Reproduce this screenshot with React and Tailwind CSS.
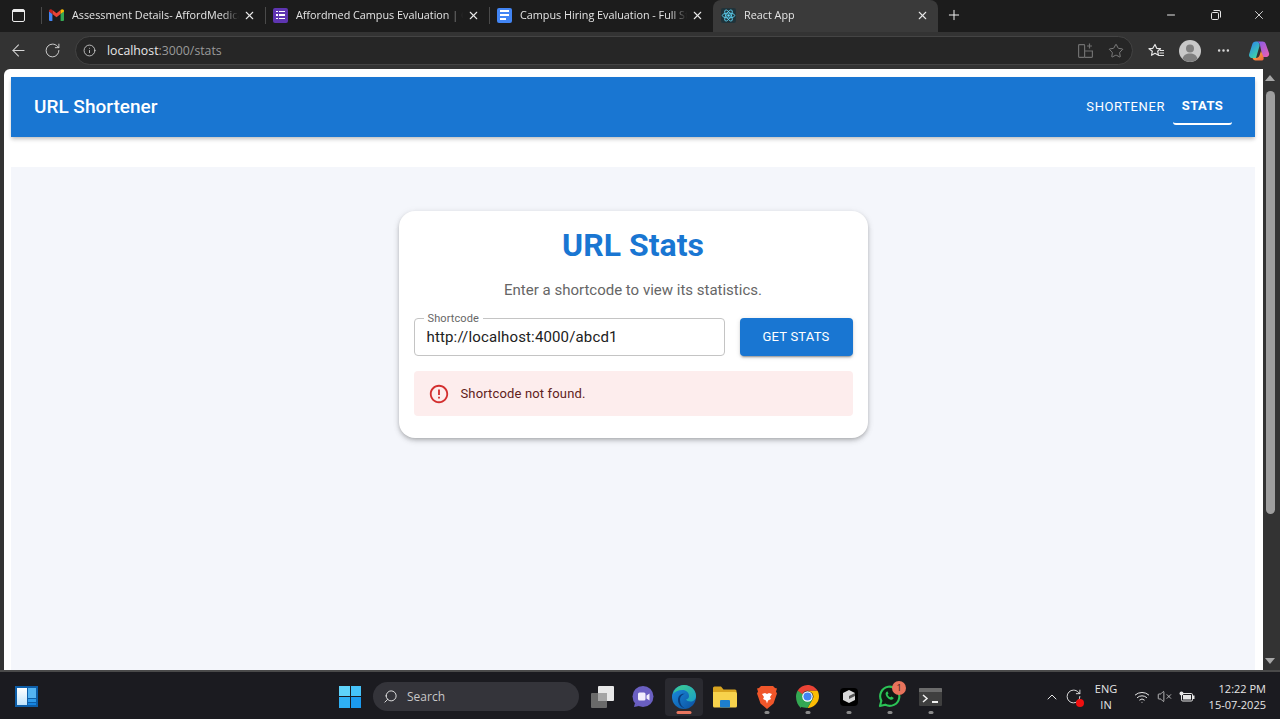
import { X, Plus, Minus, ArrowLeft, RotateCw, Info, Star, MoreHorizontal, ChevronUp, Search, Wifi, VolumeX } from 'lucide-react';

const GmailIcon = () => (
  <svg width="15" height="12" viewBox="0 0 15 12">
    <path d="M0 2v9a1 1 0 0 0 1 1h2.400V5z" fill="#4285f4" />
    <path d="M15 2v9a1 1 0 0 1-1 1h-2.400V5z" fill="#34a853" />
    <path d="M3.400 5v-4L7.500 4.200 11.600 1v4L7.500 8.200z" fill="#ea4335" />
    <path d="M0 2c0-1.600 1.900-2.500 3.400-1v4L0 2.400z" fill="#c5221f" />
    <path d="M15 2c0-1.600-1.900-2.500-3.400-1v4L15 2.400z" fill="#fbbc04" />
  </svg>
);

const FormsIcon = () => (
  <div className="w-[15px] h-[15px] rounded-[2px] bg-[#5e35b1] flex flex-col justify-center gap-[2px] px-[3px]">
    {[0, 1, 2].map(i => (
      <div key={i} className="flex gap-px">
        <div className="w-[2px] h-[1.500px] bg-white" />
        <div className="flex-1 h-[1.500px] bg-white" />
      </div>
    ))}
  </div>
);

const DocsIcon = () => (
  <div className="w-[15px] h-[15px] rounded-[2px] bg-[#4285f4] flex flex-col justify-center gap-[2px] px-[3px]">
    <div className="h-[2px] bg-white" />
    <div className="h-[2px] bg-white" />
    <div className="h-[2px] w-[6px] bg-white" />
  </div>
);

const ReactIcon = () => (
  <div className="w-[15px] h-[15px] bg-[#20333a] rounded-[2px] flex items-center justify-center">
    <svg width="15" height="15" viewBox="0 0 24 24" fill="none" stroke="#61dafb" strokeWidth="1.300">
      <circle cx="12" cy="12" r="2" fill="#61dafb" stroke="none" />
      <ellipse cx="12" cy="12" rx="10" ry="4" />
      <ellipse cx="12" cy="12" rx="10" ry="4" transform="rotate(60 12 12)" />
      <ellipse cx="12" cy="12" rx="10" ry="4" transform="rotate(120 12 12)" />
    </svg>
  </div>
);

const Tab = ({ icon, title, active, sep }) => (
  <div className={`relative h-[32px] flex items-center pb-[2px] pl-[7px] pr-[9px] shrink-0 ${active ? 'w-[225px] bg-[#3a3a3a] rounded-t-[8px]' : 'w-[224px]'}`}>
    {sep && <div className="absolute left-0 top-[7px] h-[17px] w-px bg-[#4a4a4a]" />}
    <div className="w-[16px] flex items-center justify-center shrink-0">{icon}</div>
    <div className="ml-[8px] flex-1 whitespace-nowrap overflow-hidden text-[10.800px] text-[#e4e4e4] [mask-image:linear-gradient(to_right,black_90%,transparent)]">{title}</div>
    <X className="w-[13px] h-[13px] text-[#e8e8e8] ml-[4px] shrink-0" strokeWidth={2} />
  </div>
);

const RestoreIcon = () => (
  <svg width="10" height="10" viewBox="0 0 10 10" fill="none" stroke="#e6e6e6" strokeWidth="1">
    <rect x="0.500" y="2.500" width="7" height="7" rx="1.200" />
    <path d="M2.500 0.500h5.500a1.500 1.500 0 0 1 1.500 1.500v5.500" />
  </svg>
);

const CollectionsIcon = () => (
  <svg width="15" height="15" viewBox="0 0 15 15" fill="none" stroke="#6f6f6f" strokeWidth="1.200">
    <rect x="0.600" y="1.600" width="6" height="12.800" rx="0.800" />
    <path d="M6.600 8h7.800v5.600a.8.8 0 0 1-.8.8H6.600" />
    <path d="M11.500 0.500v5M9 3h5" />
  </svg>
);

const FavoritesIcon = () => (
  <svg width="17" height="16" viewBox="0 0 17 16" fill="none" stroke="#e6e6e6" strokeWidth="1.200">
    <path d="M7 1.500l1.700 3.800 3.800.4-2.800 2.600.8 4-3.500-2-3.500 2 .8-4L1 5.700l3.800-.4z" strokeLinejoin="round" />
    <path d="M12 7.500h4M11.500 10h4.500M10.500 12.500h5.500" />
  </svg>
);

const ProfileIcon = () => (
  <svg width="22" height="22" viewBox="0 0 22 22">
    <circle cx="11" cy="11" r="11" fill="#c8c8c8" />
    <circle cx="11" cy="8.500" r="4" fill="#7f7f7f" />
    <path d="M3.500 19c.8-4 3.800-5.500 7.500-5.500s6.700 1.500 7.500 5.500a11 11 0 0 1-15 0z" fill="#7f7f7f" />
  </svg>
);

const CopilotIcon = () => (
  <svg width="22" height="22" viewBox="0 0 22 22">
    <defs>
      <linearGradient id="copA" x1="0" y1="0" x2="0.600" y2="1">
        <stop offset="0" stopColor="#2a7ff0" />
        <stop offset="1" stopColor="#3fd3a8" />
      </linearGradient>
      <linearGradient id="copB" x1="0" y1="0" x2="1" y2="1">
        <stop offset="0" stopColor="#7a5cf0" />
        <stop offset="1" stopColor="#f05fb0" />
      </linearGradient>
      <linearGradient id="copC" x1="0" y1="0" x2="1" y2="1">
        <stop offset="0" stopColor="#f8c040" />
        <stop offset="1" stopColor="#f0603f" />
      </linearGradient>
    </defs>
    <path d="M8 1.500h6.500c1.500 0 2.700.9 3.200 2.300L21 13c.7 2-.8 4-3 4h-3.500L12 5c-.4-2-2-3.500-4-3.500z" fill="url(#copB)" />
    <path d="M8 1.500c-2 0-3.300 1.300-3.800 3L1.200 14c-.7 2.200.8 4 3 4H8l3.500-12C12 3.500 10.200 1.500 8 1.500z" fill="url(#copA)" />
    <path d="M14 20.500H7.500c-1.500 0-2.500-.9-3-2.500H8c1.800 0 3-1 3.500-2.500L13 11l2.500 6c.6 2-.2 3.500-1.500 3.500z" fill="url(#copC)" />
  </svg>
);

const AlertIcon = () => (
  <svg width="22" height="22" viewBox="0 0 24 24" fill="#d32f2f">
    <path d="M11 15h2v2h-2zm0-8h2v6h-2zm.99-5C6.470 2 2 6.480 2 12s4.470 10 9.990 10C17.520 22 22 17.520 22 12S17.520 2 11.990 2zM12 20c-4.420 0-8-3.580-8-8s3.580-8 8-8 8 3.580 8 8-3.580 8-8 8z" />
  </svg>
);

const WidgetsIcon = () => (
  <div className="flex gap-px w-[23px] h-[21px] bg-[#0d5ea8] p-[2px]">
    <div className="w-[10px] bg-gradient-to-b from-white to-[#bfe3fb]" />
    <div className="flex-1 flex flex-col gap-px">
      <div className="h-[10px] bg-[#54b4f2]" />
      <div className="h-[3px] bg-[#2e9bea]" />
      <div className="flex-1 bg-[#1685e0]" />
    </div>
  </div>
);

const WindowsIcon = () => (
  <div className="grid grid-cols-2 gap-px w-[22px] h-[22px]">
    <div className="bg-[#5fd3fa]" />
    <div className="bg-[#45c2f8]" />
    <div className="bg-[#2fb0f4]" />
    <div className="bg-[#1b9aee]" />
  </div>
);

const TaskViewIcon = () => (
  <svg width="24" height="22" viewBox="0 0 24 22">
    <rect x="0" y="7" width="16" height="15" rx="1" fill="#6a6a6a" />
    <rect x="7" y="0" width="16" height="15" rx="1" fill="#e8e8e8" />
    <rect x="7" y="7" width="9" height="8" fill="#a5a5a5" />
  </svg>
);

const MeetIcon = () => (
  <svg width="22" height="22" viewBox="0 0 22 22">
    <circle cx="11" cy="10.500" r="10.500" fill="#6a5fc1" />
    <path d="M3 17l-1 4 5-1z" fill="#6a5fc1" />
    <rect x="6" y="6.500" width="7.500" height="8" rx="1.500" fill="#f1eefc" />
    <path d="M14.500 9.500l3-2v7l-3-2z" fill="#f1eefc" />
  </svg>
);

const EdgeIcon = () => (
  <svg width="24" height="24" viewBox="0 0 24 24">
    <defs>
      <linearGradient id="edgeA" x1="0" y1="0" x2="1" y2="1">
        <stop offset="0" stopColor="#3fd08a" />
        <stop offset="1" stopColor="#1a9ec9" />
      </linearGradient>
      <linearGradient id="edgeB" x1="0" y1="0" x2="1" y2="1">
        <stop offset="0" stopColor="#1b8fe0" />
        <stop offset="1" stopColor="#0c4f9e" />
      </linearGradient>
    </defs>
    <circle cx="12" cy="12" r="12" fill="url(#edgeB)" />
    <path d="M1 9C2.500 3.500 7 0 12 0c7 0 12 5 12 11 0 3.500-2.500 5.500-5.500 5.500-2 0-4-.8-4.500-2 2-.5 3-1.500 3-3.500C17 7.500 14 5 10.500 5 6 5 2.500 7 1 9z" fill="url(#edgeA)" />
    <path d="M8 15c0-3.500 2.500-6 5-6-3.500-1-7 1.500-7 6 0 4 3 7.500 7 8.500-3-1.500-5-4.500-5-8.500z" fill="#0a3d7c" />
  </svg>
);

const FolderIcon = () => (
  <svg width="24" height="22" viewBox="0 0 24 22">
    <path d="M0 2a1.500 1.500 0 0 1 1.500-1.500H8l2.500 3H22a1.500 1.500 0 0 1 1.500 1.500v3H0z" fill="#d9a520" />
    <path d="M0 6h22.500A1.500 1.500 0 0 1 24 7.500V20a1.500 1.500 0 0 1-1.500 1.500h-21A1.500 1.500 0 0 1 0 20z" fill="#f7d24c" />
    <rect x="7" y="14" width="10" height="7.500" rx="1" fill="#1d7fd0" />
  </svg>
);

const BraveIcon = () => (
  <svg width="22" height="24" viewBox="0 0 22 24">
    <path d="M5 1h12l2 2 2 .5-1 3 1 2-3.500 10L11 24l-6.500-5.500L1 8.500l1-2-1-3L3 3z" fill="#f0562a" />
    <path d="M6 9l3-1 2 1 2-1 3 1-2 3 1 2-3 1.500-1 3-1-3L7 14l1-2z" fill="#fff" />
  </svg>
);

const ChromeIcon = () => (
  <svg width="23" height="23" viewBox="0 0 48 48">
    <path d="M24 24L10 48h0C4 43 0 34 0 24 0 19 1.500 15 3.500 11.500z" fill="#34a853" />
    <path d="M3.500 11.500C8 4.500 15.500 0 24 0c9 0 17 5 21 12H24c-5 0-9 3-10.500 7.500z" fill="#ea4335" />
    <path d="M45 12c2 3.500 3 7.500 3 12 0 13-11 24-24 24l10.500-18.500C36 27 37 25 36 22c-.5-4-3-8-12-10z" fill="#fbbc04" />
    <path d="M10 45L24 24l10.500 5.500L24 48c-5 0-10-1-14-3z" fill="#34a853" />
    <circle cx="24" cy="24" r="11" fill="#fff" />
    <circle cx="24" cy="24" r="8.500" fill="#4285f4" />
  </svg>
);

const BoxAppIcon = () => (
  <div className="w-[18px] h-[18px] bg-black rounded-[4px] flex items-center justify-center">
    <svg width="12" height="13" viewBox="0 0 12 13">
      <path d="M6 0l6 3v7l-6 3-6-3V3z" fill="#d8d8d8" />
      <path d="M6 6l6-3v3L6 9z" fill="#555" />
    </svg>
  </div>
);

const WhatsappIcon = () => (
  <svg width="23" height="23" viewBox="0 0 24 24" fill="none">
    <path d="M2 22l1.500-5.500A10 10 0 1 1 7.500 20.500z" stroke="#2bc456" strokeWidth="2.200" fill="#101a14" strokeLinejoin="round" />
    <path d="M8.500 7.500c-1.200 1.200-.6 3.500 1.500 5.700s4.500 2.800 5.700 1.500l.8-1.200-2.500-1.500-1 .9c-1.500-.5-2.500-1.500-3-3l1-1-1.300-2.500z" fill="#2bc456" />
  </svg>
);

const TerminalIcon = () => (
  <div className="w-[23px] h-[18px] bg-[#3f3f3f] rounded-[1px] flex flex-col overflow-hidden">
    <div className="h-[4px] bg-[#6b6b6b]" />
    <div className="flex-1 flex items-center pl-[3px] gap-[2px]">
      <svg width="8" height="9" viewBox="0 0 8 9" fill="none" stroke="#f0f0f0" strokeWidth="1.500"><path d="M1 1l4 3.500L1 8" /></svg>
      <div className="w-[6px] h-[1.500px] bg-[#f0f0f0] mt-[7px]" />
    </div>
  </div>
);

const SyncIcon = () => (
  <div className="relative w-[18px] h-[18px]">
    <RotateCw className="w-[17px] h-[17px] text-[#e6e6e6]" strokeWidth={1.300} />
    <div className="absolute right-[-1px] bottom-[-1px] w-[8px] h-[8px] rounded-full bg-[#f01010]" />
  </div>
);

const BatteryIcon = () => (
  <svg width="16" height="12" viewBox="0 0 16 12" fill="none">
    <rect x="2.500" y="2.500" width="11" height="7.500" rx="1.200" stroke="#e6e6e6" />
    <rect x="4" y="4" width="8" height="4.500" fill="#e6e6e6" />
    <rect x="14" y="4.500" width="1.500" height="3.500" fill="#e6e6e6" />
    <circle cx="2.500" cy="2.500" r="2" fill="#e6e6e6" />
  </svg>
);

const TaskbarItem = ({ children, className = 'w-[41px]', dot }) => (
  <div className={`relative h-[38px] flex items-center justify-center shrink-0 ${className}`}>
    {children}
    {dot && <div className="absolute bottom-[2px] left-1/2 -translate-x-1/2 w-[5px] h-[3px] rounded-full bg-[#8a8a8a]" />}
  </div>
);

export default function App() {
  return (
    <div className="w-[1280px] h-[719px] overflow-hidden flex flex-col bg-[#1c1c1f] font-['Open_Sans',sans-serif]">
      {/* browser tabs */}
      <div className="h-[32px] bg-[#1c1c1c] flex items-center shrink-0">
        <div className="w-[41px] flex justify-center pr-[5px] pb-[2px]">
          <div className="w-[13px] h-[13px] border-[1.500px] border-[#ececec] rounded-[2px] relative">
            <div className="h-[2px] bg-[#ececec]" />
          </div>
        </div>
        <Tab sep icon={<GmailIcon />} title="Assessment Details- AffordMedical" />
        <Tab sep icon={<FormsIcon />} title="Affordmed Campus Evaluation | Campus" />
        <Tab sep icon={<DocsIcon />} title="Campus Hiring Evaluation - Full Stack" />
        <Tab active icon={<ReactIcon />} title="React App" />
        <div className="w-[32px] flex justify-center pb-[2px]">
          <Plus className="w-[16px] h-[16px] text-[#f0f0f0]" strokeWidth={1.500} />
        </div>
        <div className="ml-auto flex items-center pb-[2px]">
          <div className="w-[43px] flex justify-center pr-[3px]"><Minus className="w-[12px] h-[12px] text-[#e6e6e6]" /></div>
          <div className="w-[43px] flex justify-center"><RestoreIcon /></div>
          <div className="w-[43px] flex justify-center"><X className="w-[14px] h-[14px] text-[#e6e6e6]" strokeWidth={1.500} /></div>
        </div>
      </div>

      {/* address bar */}
      <div className="h-[37px] bg-[#333333] flex items-center shrink-0">
        <div className="w-[36px] flex justify-center"><ArrowLeft className="w-[19px] h-[19px] text-[#d8d8d8]" strokeWidth={1.300} /></div>
        <div className="w-[32px] flex justify-center"><RotateCw className="w-[17px] h-[17px] text-[#d8d8d8]" strokeWidth={1.300} /></div>
        <div className="ml-[7px] w-[1058px] h-[29px] bg-[#262626] rounded-full border border-[#444444] flex items-center">
          <Info className="w-[13px] h-[13px] ml-[7px] text-[#d0d0d0]" strokeWidth={1.600} />
          <div className="ml-[11px] pt-[1px] text-[12.300px] text-[#9a9a9a]"><span className="text-[#e8e8e8]">localhost</span>:3000/stats</div>
          <div className="ml-auto flex items-center gap-[15px] mr-[8px]">
            <CollectionsIcon />
            <Star className="w-[16px] h-[16px] text-[#8a8a8a]" strokeWidth={1.300} />
          </div>
        </div>
        <div className="ml-[15px]"><FavoritesIcon /></div>
        <div className="ml-[14px]"><ProfileIcon /></div>
        <MoreHorizontal className="ml-[15px] w-[15px] h-[15px] text-[#d8d8d8]" strokeWidth={2} />
        <div className="ml-[17px]"><CopilotIcon /></div>
      </div>

      {/* page viewport */}
      <div className="h-[601px] bg-[#333333] flex pl-[4px] shrink-0">
        <div className="w-[1259px] bg-white rounded-tl-[6px] pt-[8px] flex flex-col">
          <div className="ml-[7px] w-[1244px] h-[60px] bg-[#1976d2] shadow-[0_2px_4px_-1px_rgba(0,0,0,0.2),0_3px_4px_0_rgba(0,0,0,0.1)] flex items-center pl-[23px] pr-[23px] font-['Roboto',sans-serif] text-white shrink-0">
            <div className="text-[19px] font-medium">URL Shortener</div>
            <div className="ml-auto flex items-center text-[13px] tracking-[0.6px]">
              <div className="mr-[8px]">SHORTENER</div>
              <div className="w-[59px] h-[36px] flex items-center justify-center font-bold tracking-[0.4px] border-b-2 border-white rounded-b-[3px]">STATS</div>
            </div>
          </div>
          <div className="mt-[30px] ml-[7px] w-[1244px] flex-1 bg-[#f4f6fb] flex flex-col items-center pt-[44px] font-['Roboto',sans-serif]">
            <div className="w-[469px] h-[227px] bg-white rounded-[16px] shadow-[0_2px_4px_-1px_rgba(0,0,0,0.25),0_3px_6px_0_rgba(0,0,0,0.1),0_1px_8px_0_rgba(0,0,0,0.06)] px-[15px] pt-[15px]">
              <div className="text-center text-[32px] leading-[38px] font-bold text-[#1976d2]">URL Stats</div>
              <div className="mt-[14px] text-center text-[15px] leading-[24px] text-[#666666]">Enter a shortcode to view its statistics.</div>
              <div className="mt-[16px] flex gap-[15px]">
                <div className="relative w-[311px] h-[38px] border border-[#c4c4c4] rounded-[4px] flex items-center pl-[12px] text-[15px] tracking-[0.15px] text-[#212121]">
                  <div className="absolute left-[9px] top-[-6px] px-[4px] bg-white text-[11px] leading-[12px] tracking-[0.1px] text-[#666666]">Shortcode</div>
                  http://localhost:4000/abcd1
                </div>
                <div className="w-[113px] h-[38px] bg-[#1976d2] rounded-[4px] shadow-[0_3px_1px_-2px_rgba(0,0,0,0.2),0_2px_2px_0_rgba(0,0,0,0.14),0_1px_5px_0_rgba(0,0,0,0.12)] flex items-center justify-center text-white text-[13px] tracking-[0.2px]">GET STATS</div>
              </div>
              <div className="mt-[15px] h-[45px] bg-[#fdeded] rounded-[4px] flex items-center pl-[14px] text-[13px] tracking-[0.15px] text-[#5f2120]">
                <AlertIcon />
                <div className="ml-[11px]">Shortcode not found.</div>
              </div>
            </div>
          </div>
        </div>
        {/* scrollbar */}
        <div className="w-[17px] flex flex-col items-center pr-[3px] pt-[6px] pb-[6px]">
          <div className="w-0 h-0 border-x-[5px] border-x-transparent border-b-[6px] border-b-[#a8a8a8]" />
          <div className="mt-[10px] w-[9px] h-[423px] rounded-full bg-[#9e9e9e]" />
          <div className="mt-auto w-0 h-0 border-x-[5px] border-x-transparent border-t-[6px] border-t-[#a8a8a8]" />
        </div>
      </div>

      <div className="h-[2px] bg-[#4a4a4a] shrink-0" />

      {/* taskbar */}
      <div className="flex-1 bg-[#1b1b20] flex items-center pt-[2px]">
        <div className="ml-[15px]"><WidgetsIcon /></div>
        <div className="ml-[301px]"><WindowsIcon /></div>
        <div className="ml-[12px] w-[206px] h-[29px] rounded-full bg-[#34343a] flex items-center pl-[10px] text-[#c8c8c8] text-[12px]">
          <Search className="w-[15px] h-[15px] -scale-x-100 text-[#e6e6e6]" strokeWidth={1.500} />
          <span className="ml-[9px]">Search</span>
        </div>
        <div className="ml-[3px] flex items-center">
          <TaskbarItem><TaskViewIcon /></TaskbarItem>
          <TaskbarItem className="w-[42px] pr-[3px]"><MeetIcon /></TaskbarItem>
          <TaskbarItem className="w-[38px] bg-[#2a2a30] rounded-[4px]">
            <EdgeIcon />
            <div className="absolute bottom-[2px] left-1/2 -translate-x-1/2 w-[15px] h-[3px] rounded-full bg-[#e8765f]" />
          </TaskbarItem>
          <TaskbarItem className="w-[43px]"><FolderIcon /></TaskbarItem>
          <TaskbarItem dot><BraveIcon /></TaskbarItem>
          <TaskbarItem dot><ChromeIcon /></TaskbarItem>
          <TaskbarItem dot><BoxAppIcon /></TaskbarItem>
          <TaskbarItem dot>
            <WhatsappIcon />
            <div className="absolute top-[3px] right-[4px] w-[14px] h-[14px] rounded-full bg-[#e8735c] text-[9px] leading-[14px] text-center text-[#3a1a12]">1</div>
          </TaskbarItem>
          <TaskbarItem dot><TerminalIcon /></TaskbarItem>
        </div>
        <div className="ml-auto flex items-center text-[#e6e6e6] text-[11px] pr-[14px]">
          <ChevronUp className="w-[16px] h-[16px]" strokeWidth={1.500} />
          <div className="ml-[5px]"><SyncIcon /></div>
          <div className="ml-[8px] w-[30px] text-center leading-[16px]">ENG<br />IN</div>
          <Wifi className="ml-[13px] w-[16px] h-[16px]" strokeWidth={1.500} />
          <VolumeX className="ml-[7px] w-[15px] h-[15px]" strokeWidth={1.200} />
          <div className="ml-[7px]"><BatteryIcon /></div>
          <div className="ml-[13px] text-right leading-[16px] w-[58px]">12:22 PM<br />15-07-2025</div>
        </div>
      </div>
    </div>
  );
}
